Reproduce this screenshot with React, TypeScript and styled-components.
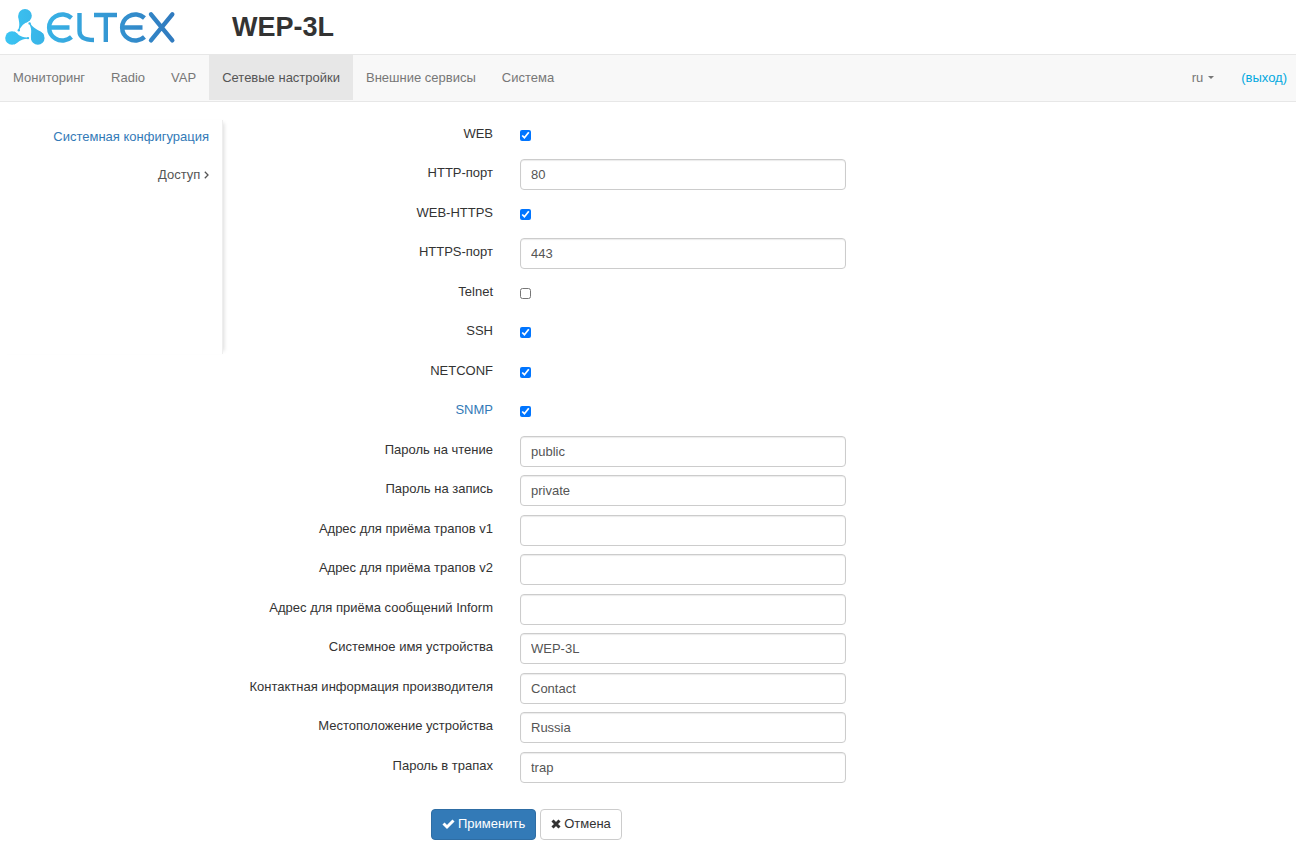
import React from "react";
import styled, { createGlobalStyle, css } from "styled-components";

const GlobalStyle = createGlobalStyle`
  *, *::before, *::after { box-sizing: border-box; }
  body {
    margin: 0;
    background: #fff;
    color: #333;
    font: 13px/18px "Liberation Sans", Arial, Helvetica, sans-serif;
  }
  a { text-decoration: none; }
  input, button { font: inherit; }
`;

const Header = styled.header`
  display: flex;
  align-items: center;
  height: 54px;
  padding-left: 4px;
`;

const LogoLink = styled.a`
  display: flex;
  width: 228px;
`;

const DeviceName = styled.h1`
  margin: 0;
  font-size: 27px;
  line-height: 30px;
  font-weight: bold;
`;

const NavBar = styled.nav`
  display: flex;
  justify-content: space-between;
  height: 48px;
  background: #f8f8f8;
  border: solid #e7e7e7;
  border-width: 1px 0;
`;

const NavGroup = styled.div`
  display: flex;
  align-items: flex-start;
`;

const navItem = css`
  display: flex;
  align-items: center;
  height: 45px;
  padding: 0 13px;
  color: #777;
`;

const NavLink = styled.a<{ $active?: boolean }>`
  ${navItem}
  ${(p) => p.$active && "background: #e7e7e7; color: #555;"}
`;

const LanguageButton = styled.button`
  ${navItem}
  gap: 5px;
  border: 0;
  background: none;
`;

const Caret = styled.span`
  border: 3px solid transparent;
  border-top-color: currentColor;
  border-bottom: 0;
`;

const LogoutLink = styled.a`
  ${navItem}
  padding: 0 9px 0 14px;
  color: #02a9e0;
`;

const Body = styled.div`
  display: flex;
  align-items: flex-start;
  padding-top: 18px;
`;

const Sidebar = styled.aside`
  display: flex;
  flex-direction: column;
  gap: 20px;
  width: 223px;
  min-height: 234px;
  padding: 8px 13px;
  text-align: right;
  border-right: 1px solid #eee;
  box-shadow: 4px 0 4px -3px rgba(0, 0, 0, 0.15);
`;

const SideLink = styled.a<{ $current?: boolean }>`
  color: ${(p) => (p.$current ? "#337ab7" : "#555")};
`;

const Form = styled.form`
  flex: 1;
`;

const Fields = styled.div`
  display: grid;
  grid-template-rows: repeat(8, 39px 40px) 40px;
`;

const Row = styled.div`
  display: grid;
  grid-template-columns: minmax(0, 270px) minmax(0, 326px);
  column-gap: 27px;
  align-items: start;
`;

const Label = styled.label<{ $accent?: boolean }>`
  padding-top: 5px;
  text-align: right;
  color: ${(p) => (p.$accent ? "#337ab7" : "#333")};
`;

const TextInput = styled.input`
  width: 100%;
  height: 31px;
  padding: 4px 10px 5px;
  color: #555;
  background: #fff;
  border: 1px solid #ccc;
  border-radius: 4px;
  box-shadow: inset 0 1px 1px rgba(0, 0, 0, 0.08);
`;

const Checkbox = styled.input`
  width: 11px;
  height: 11px;
  margin: 10px 0 0;
`;

const Actions = styled.div`
  display: flex;
  gap: 4px;
  padding: 17px 0 5px 208px;
`;

const ActionButton = styled.button<{ $primary?: boolean }>`
  display: flex;
  align-items: center;
  gap: 3px;
  height: 31px;
  padding: 0 10px 1px;
  border: 1px solid ${(p) => (p.$primary ? "#2e6da4" : "#ccc")};
  border-radius: 4px;
  background: ${(p) => (p.$primary ? "#337ab7" : "#fff")};
  color: ${(p) => (p.$primary ? "#fff" : "#333")};
`;

type Field = { id: string; label: string; value?: string; checked?: boolean; accent?: boolean };

const fields: Field[] = [
  { id: "web", label: "WEB", checked: true },
  { id: "http-port", label: "HTTP-порт", value: "80" },
  { id: "web-https", label: "WEB-HTTPS", checked: true },
  { id: "https-port", label: "HTTPS-порт", value: "443" },
  { id: "telnet", label: "Telnet", checked: false },
  { id: "ssh", label: "SSH", checked: true },
  { id: "netconf", label: "NETCONF", checked: true },
  { id: "snmp", label: "SNMP", checked: true, accent: true },
  { id: "read-password", label: "Пароль на чтение", value: "public" },
  { id: "write-password", label: "Пароль на запись", value: "private" },
  { id: "trap-v1", label: "Адрес для приёма трапов v1", value: "" },
  { id: "trap-v2", label: "Адрес для приёма трапов v2", value: "" },
  { id: "inform", label: "Адрес для приёма сообщений Inform", value: "" },
  { id: "system-name", label: "Системное имя устройства", value: "WEP-3L" },
  { id: "contact", label: "Контактная информация производителя", value: "Contact" },
  { id: "location", label: "Местоположение устройства", value: "Russia" },
  { id: "trap-password", label: "Пароль в трапах", value: "trap" },
];

const navItems = ["Мониторинг", "Radio", "VAP", "Сетевые настройки", "Внешние сервисы", "Система"];

function Logo() {
  return (
    <svg width="172" height="38" viewBox="4 8 172 38" role="img" aria-label="ELTEX">
      <defs>
        <linearGradient id="brand" gradientUnits="userSpaceOnUse" x1="4" y1="0" x2="176" y2="0">
          <stop offset="0" stopColor="#3bc5f3" />
          <stop offset="1" stopColor="#3079be" />
        </linearGradient>
      </defs>
      <g fill="url(#brand)">
        <circle cx="25" cy="15.8" r="6.8" />
        <circle cx="12" cy="38" r="6.8" />
        <circle cx="37.800" cy="38" r="6.8" />
        <path d="M18.300 16C18.500 21 20.500 24 18.300 29.800L19.300 30.300C21.500 25.500 24 23.500 28 21.800Z" />
        <path d="M14 31.500C18 33.500 20 37.800 27.500 37.500V38.700C20 38.700 18.500 43 14 44.500Z" />
        <path d="M44.200 36C42.500 30 34.500 30.500 30.200 23.200L29.200 23.800C33 31 30 34 31.300 40Z" />
        <circle cx="18.800" cy="30.300" r="1.2" />
        <circle cx="28" cy="38.100" r="1.2" />
        <circle cx="29.600" cy="23.400" r="1.2" />
      </g>
      <g fill="none" stroke="url(#brand)" strokeWidth="4.4">
        <path d="M71.500 18C67 14 60.500 13.300 55.500 16.300C47 21.500 47 33.500 55.500 38.700C60.500 41.700 67 41 71.500 37M50 27.500H69.500" />
        <path d="M79.500 13V31C79.500 37.500 84 40 94 40" />
        <path d="M94 15H117M105.800 15V42" />
        <path d="M144.500 18C140 14 133.500 13.300 128.500 16.300C120 21.500 120 33.500 128.500 38.700C133.500 41.700 140 41 144.500 37M123 27.500H142.500" />
        <path d="M151 14.300L172.300 40.300M172.300 14.300L151 40.300" strokeLinecap="round" />
      </g>
    </svg>
  );
}

function CheckIcon() {
  return (
    <svg width="13" height="12" viewBox="0 0 13 12" aria-hidden="true">
      <path d="M1.500 5.500L5 9L11.500 2.500" fill="none" stroke="currentColor" strokeWidth="3" />
    </svg>
  );
}

function CrossIcon() {
  return (
    <svg width="10" height="10" viewBox="0 0 10 10" aria-hidden="true">
      <path d="M1.500 1.500L8.500 8.500M8.500 1.500L1.500 8.500" stroke="currentColor" strokeWidth="3" />
    </svg>
  );
}

function ChevronIcon() {
  return (
    <svg width="5" height="8" viewBox="0 0 5 8" aria-hidden="true">
      <path d="M0.800 0.800L4 4L0.800 7.200" fill="none" stroke="currentColor" strokeWidth="1.3" />
    </svg>
  );
}

export default function App() {
  return (
    <>
      <GlobalStyle />
      <Header>
        <LogoLink href="#home">
          <Logo />
        </LogoLink>
        <DeviceName>WEP-3L</DeviceName>
      </Header>
      <NavBar>
        <NavGroup>
          {navItems.map((name) => (
            <NavLink key={name} href="#" $active={name === "Сетевые настройки"}>
              {name}
            </NavLink>
          ))}
        </NavGroup>
        <NavGroup>
          <LanguageButton type="button">
            ru
            <Caret />
          </LanguageButton>
          <LogoutLink href="#logout">(выход)</LogoutLink>
        </NavGroup>
      </NavBar>
      <Body>
        <Sidebar>
          <SideLink href="#system" $current>
            Системная конфигурация
          </SideLink>
          <SideLink href="#access">
            Доступ <ChevronIcon />
          </SideLink>
        </Sidebar>
        <Form onSubmit={(e) => e.preventDefault()}>
          <Fields>
            {fields.map((f) => (
              <Row key={f.id}>
                <Label htmlFor={f.id} $accent={f.accent}>
                  {f.label}
                </Label>
                {f.value === undefined ? (
                  <Checkbox id={f.id} type="checkbox" defaultChecked={f.checked} />
                ) : (
                  <TextInput id={f.id} type="text" defaultValue={f.value} />
                )}
              </Row>
            ))}
          </Fields>
          <Actions>
            <ActionButton type="submit" $primary>
              <CheckIcon />
              Применить
            </ActionButton>
            <ActionButton type="button">
              <CrossIcon />
              Отмена
            </ActionButton>
          </Actions>
        </Form>
      </Body>
    </>
  );
}
